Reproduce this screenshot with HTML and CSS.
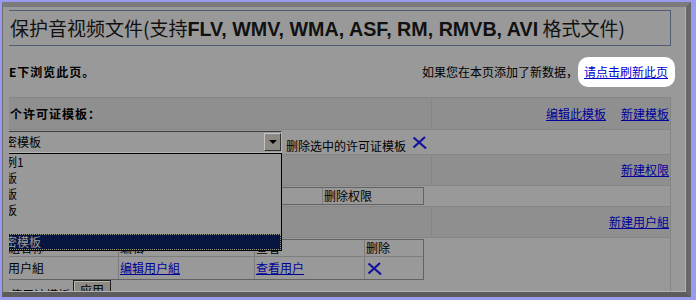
FILE: index.html
```html
<!doctype html>
<html lang="zh">
<head>
  <meta charset="UTF-8">
  <title>保护音视频文件</title>
  <link rel="stylesheet" href="styles.css">
</head>
<body>
<div class="screen">
  <div class="window">
    <div class="viewport">
      <div class="page">
        <h1 class="title">保护音视频文件(支持<b>FLV, WMV, WMA, ASF, RM, RMVB, AVI</b> 格式文件)</h1>
        <div class="info">
          <p class="tip"><span class="cut-tip">请在IE下浏览此页。</span></p>
          <p class="refresh">如果您在本页添加了新数据，<span class="spot"><a href="#">请点击刷新此页</a></span></p>
        </div>
        <div class="panel">
          <div class="bar bar-first">
            <div class="cell"><span class="cut-bar">选择一个许可证模板：</span></div>
            <div class="cell links"><a href="#">编辑此模板</a><a href="#">新建模板</a></div>
          </div>
          <div class="pick">
            <div class="select">
              <span>加密模板</span>
              <i class="arrow"></i>
              <ul class="dropdown">
                <li>示例1</li>
                <li>旧版</li>
                <li>新版</li>
                <li>模板</li>
                <li></li>
                <li class="on">加密模板</li>
              </ul>
            </div>
            <span class="del-text">删除选中的许可证模板</span>
            <svg class="del" width="15" height="13" viewBox="0 0 15 13">
              <path d="M1.5 1.5 L13 11.5 L14 12.5 M13 1 L1.5 11.5" stroke="#12129c" stroke-width="2.2" fill="none"/>
            </svg>
          </div>
          <div class="bar">
            <div class="cell"></div>
            <div class="cell links"><a href="#">新建权限</a></div>
          </div>
          <div class="sub sub-perm">
            <table class="grid">
              <tr>
                <td class="p1">权限名称</td>
                <td class="p2">编辑权限</td>
                <td class="p3">删除权限</td>
              </tr>
            </table>
          </div>
          <div class="bar">
            <div class="cell"></div>
            <div class="cell links"><a href="#">新建用户組</a></div>
          </div>
          <div class="sub sub-group">
            <table class="grid">
              <tr class="head">
                <td class="g1">用户組名称</td>
                <td class="g2">编辑</td>
                <td class="g3">查看</td>
                <td class="g4">删除</td>
              </tr>
              <tr class="row">
                <td>默认用户組</td>
                <td><a href="#">编辑用户組</a></td>
                <td><a href="#">查看用户</a></td>
                <td>
                  <svg class="del" width="15" height="13" viewBox="0 0 15 13">
                    <path d="M1.5 1.5 L13 11.5 L14 12.5 M13 1 L1.5 11.5" stroke="#12129c" stroke-width="2.2" fill="none"/>
                  </svg>
                </td>
              </tr>
            </table>
            <div class="apply">
              <span>使用该模板</span>
              <button>应用</button>
            </div>
          </div>
        </div>
      </div>
    </div>
  </div>
</div>
</body>
</html>
```

FILE: styles.css
```css
* {
  margin: 0;
  padding: 0;
  box-sizing: border-box;
}

html,
body {
  width: 696px;
  height: 300px;
  overflow: hidden;
}

body {
  font: 12px/16px "Noto Sans CJK SC", "Liberation Sans", sans-serif;
  color: #000;
  background: #9a9aee;
}

a {
  color: #000099;
  text-decoration: underline;
}

ul {
  list-style: none;
}

.screen {
  height: 300px;
  padding: 2px 5px 3px 2px;
}

.window {
  height: 100%;
  display: flex;
  background: #999;
  border-style: solid;
  border-width: 5px 5px 5px 1px;
  border-color: #7b7b7b #676767 #5c5c5c #6e6e6e;
  padding-left: 6px;
}

.viewport {
  flex: 1;
  overflow: hidden;
  border-right: 1px solid #b2b2b2;
  border-bottom: 1px solid #b2b2b2;
}

.page {
  width: 662px;
}

/* title */
.title {
  width: 672px;
  height: 36px;
  margin: 3px 0 0 -10px;
  padding-left: 10px;
  border: 1px solid #4c5e6f;
  font-size: 19px;
  line-height: 34px;
  font-weight: normal;
  color: #111;
  white-space: nowrap;
}

.title b {
  font-family: "Liberation Sans", sans-serif;
  font-size: 19.7px;
}

/* info line */
.info {
  height: 51px;
  display: flex;
  align-items: center;
  justify-content: space-between;
  padding-right: 3px;
}

.tip {
  white-space: nowrap;
}

.cut-tip {
  display: inline-block;
  margin-left: -31px;
  font-weight: bold;
  letter-spacing: 1px;
}

.refresh {
  display: flex;
  align-items: center;
  white-space: nowrap;
}

.spot {
  background: #fff;
  border-radius: 10px;
  padding: 7px 7px 7px 6px;
  margin-right: -7px;
}

.spot a {
  color: #0000d0;
}

/* panel */
.panel {
  border-right: 1px solid #858585;
}

.panel > div {
  border-top: 1px solid #868686;
}

.bar {
  height: 31px;
  display: grid;
  grid-template-columns: 423px 1fr;
  background: #8f8f8f;
}

.bar-first {
  height: 32px;
}

.bar .cell {
  display: flex;
  align-items: center;
  white-space: nowrap;
}

.bar .cell:first-child {
  border-right: 1px solid #868686;
}

.links {
  justify-content: flex-end;
  gap: 15px;
  padding-right: 1px;
}

.cut-bar {
  margin-left: -38px;
  font-weight: bold;
  letter-spacing: 1px;
}

/* select row */
.pick {
  height: 25px;
  display: flex;
  align-items: center;
  white-space: nowrap;
}

.select {
  position: relative;
  width: 292px;
  height: 22px;
  margin-left: -19px;
  padding-left: 2px;
  display: flex;
  align-items: center;
  border: 1px solid;
  border-color: #3c3c3c #b4b4b4 #b4b4b4 #3c3c3c;
}

.arrow {
  margin-left: auto;
  width: 17px;
  height: 18px;
  display: flex;
  align-items: center;
  justify-content: center;
  background: #8c8a82;
  border: 1px solid;
  border-color: #c4c4c4 #303030 #303030 #c4c4c4;
}

.arrow::after {
  content: "";
  border-left: 4px solid transparent;
  border-right: 4px solid transparent;
  border-top: 4px solid #000;
}

.dropdown {
  position: absolute;
  top: calc(100% + 1px);
  left: -1px;
  width: 292px;
  height: 98px;
  background: #999;
  border: 1px solid #000;
  z-index: 10;
}

.dropdown li {
  height: 16px;
  padding-left: 2px;
  white-space: nowrap;
}

.dropdown .on {
  background: #061640;
  color: #9a9a9a;
  outline: 1px dotted #9a9a80;
  outline-offset: -1px;
}

.del-text {
  margin: 7px 0 0 4px;
}

.del {
  display: block;
  margin-left: 6px;
}

/* tables */
.grid {
  margin-left: -27px;
  width: 441px;
  border-collapse: separate;
  border-spacing: 0;
  table-layout: fixed;
  border: 1px solid #626262;
}

.grid td {
  padding: 0 1px;
  white-space: nowrap;
  overflow: hidden;
  border-right: 1px solid #7e7e7e;
  border-bottom: 1px solid #7e7e7e;
  vertical-align: middle;
}

.grid td:last-child {
  border-right: 0;
}

.grid tr:last-child td {
  border-bottom: 0;
}

.sub-perm {
  padding: 1px 0 1px;
}

.sub-perm td {
  height: 16px;
}

.p1 { width: 168px; }
.p2 { width: 172px; }
.p3 { width: 100px; }

.sub-group {
  padding-top: 1px;
}

.g1 { width: 136px; }
.g2 { width: 136px; }
.g3 { width: 110px; }
.g4 { width: 58px; }

.head td {
  height: 17px;
}

.row td {
  height: 22px;
}

.row .del {
  margin-left: 1px;
}

/* apply row */
.apply {
  display: flex;
  align-items: flex-start;
  gap: 3px;
  white-space: nowrap;
}

.apply span {
  margin: 7px 0 0 1px;
}

.apply button {
  width: 38px;
  height: 20px;
  font: inherit;
  background: #8c8a82;
  border: 1px solid #1e1e1e;
  box-shadow: inset 1px 1px 0 #b8b6ae;
}
```
